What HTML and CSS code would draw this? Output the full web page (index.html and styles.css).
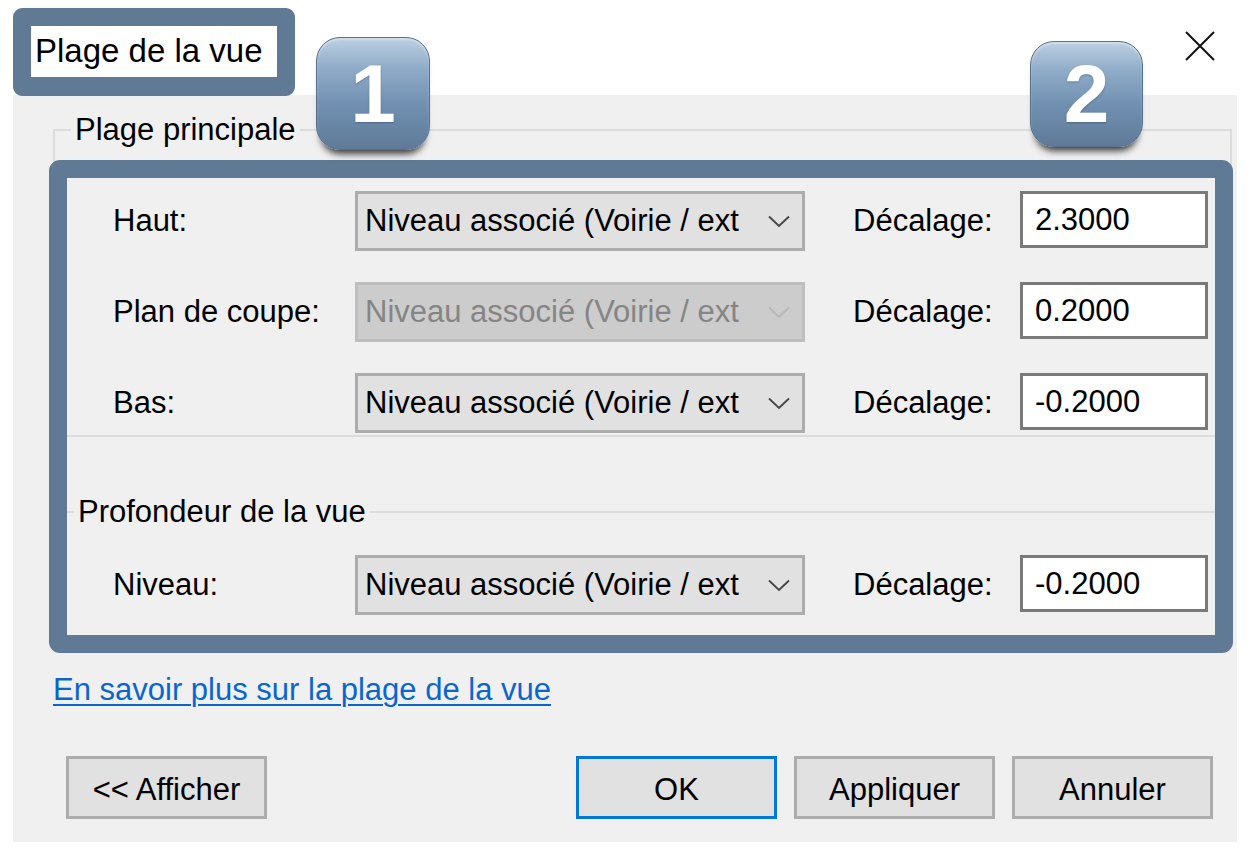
FILE: index.html
```html
<!DOCTYPE html>
<html lang="fr">
<head>
<meta charset="utf-8">
<title>Plage de la vue</title>
<link rel="stylesheet" href="styles.css">
</head>
<body>
<div class="window">
  <header class="titlebar">
    <span class="title">Plage de la vue</span>
    <span class="close" aria-label="Fermer">
      <svg width="32" height="32" viewBox="0 0 32 32"><path d="M2 2 L30 30 M30 2 L2 30" stroke="#111" stroke-width="2" fill="none"/></svg>
    </span>
  </header>
  <main class="dialog">
    <fieldset class="group group-main">
      <legend class="legend">Plage principale</legend>
      <div class="row">
        <span class="label">Haut:</span>
        <div class="select"><span class="select-text">Niveau associé (Voirie / ext</span><svg class="chev" width="22" height="13" viewBox="0 0 22 13"><path d="M1 1.5 L11 11 L21 1.5" stroke="#444" stroke-width="1.8" fill="none"/></svg></div>
        <span class="offset-label">Décalage:</span>
        <div class="input">2.3000</div>
      </div>
      <div class="row">
        <span class="label">Plan de coupe:</span>
        <div class="select disabled"><span class="select-text">Niveau associé (Voirie / ext</span><svg class="chev" width="22" height="13" viewBox="0 0 22 13"><path d="M1 1.5 L11 11 L21 1.5" stroke="#b8b8b8" stroke-width="1.8" fill="none"/></svg></div>
        <span class="offset-label">Décalage:</span>
        <div class="input">0.2000</div>
      </div>
      <div class="row">
        <span class="label">Bas:</span>
        <div class="select"><span class="select-text">Niveau associé (Voirie / ext</span><svg class="chev" width="22" height="13" viewBox="0 0 22 13"><path d="M1 1.5 L11 11 L21 1.5" stroke="#444" stroke-width="1.8" fill="none"/></svg></div>
        <span class="offset-label">Décalage:</span>
        <div class="input">-0.2000</div>
      </div>
    </fieldset>
    <fieldset class="group group-depth">
      <legend class="legend">Profondeur de la vue</legend>
      <div class="row">
        <span class="label">Niveau:</span>
        <div class="select"><span class="select-text">Niveau associé (Voirie / ext</span><svg class="chev" width="22" height="13" viewBox="0 0 22 13"><path d="M1 1.5 L11 11 L21 1.5" stroke="#444" stroke-width="1.8" fill="none"/></svg></div>
        <span class="offset-label">Décalage:</span>
        <div class="input">-0.2000</div>
      </div>
    </fieldset>
    <a class="link" href="#">En savoir plus sur la plage de la vue</a>
    <footer class="buttons">
      <span class="btn">&lt;&lt; Afficher</span>
      <span class="btn btn-default">OK</span>
      <span class="btn">Appliquer</span>
      <span class="btn">Annuler</span>
    </footer>
  </main>
  <div class="mark mark-title"></div>
  <div class="mark mark-panel"></div>
  <div class="badge badge-1">1</div>
  <div class="badge badge-2">2</div>
</div>
</body>
</html>
```
FILE: styles.css
```css
* { box-sizing: border-box; }
html, body { margin: 0; padding: 0; background: #ffffff; }
body {
  font-family: "Liberation Sans", Arial, sans-serif;
  font-size: 31px;
  color: #000;
}
.window {
  position: relative;
  width: 1258px;
  height: 852px;
  overflow: hidden;
}
.titlebar {
  height: 95px;
  display: flex;
  align-items: center;
  justify-content: space-between;
  padding: 6px 42px 0 35px;
}
.title { font-size: 33px; line-height: 36px; }
.close { display: flex; width: 32px; height: 32px; margin-top: -10px; }

.dialog {
  margin-left: 13px;
  width: 1224px;
  height: 747px;
  background: #f0f0f0;
  padding: 17px 5px 21px 40px;
  display: flex;
  flex-direction: column;
}
.group {
  margin: 0;
  border: 2px solid #dcdcdc;
  padding: 43px 0 2px 0;
  min-width: 0;
}
.legend {
  line-height: 36px;
  padding: 0 4px;
  margin-left: 16px;
}
.group-depth {
  margin-top: 57px;
  padding-top: 25px;
  padding-bottom: 23px;
}
.group-depth .legend { margin-left: 19px; }
.row {
  display: grid;
  grid-template-columns: 242px 450px 215px 188px;
  align-items: center;
  height: 60px;
  padding-left: 58px;
  box-sizing: content-box;
}
.row + .row { margin-top: 31px; }
.label { line-height: 36px; }
.select {
  height: 60px;
  border: 3px solid #adadad;
  background: #e1e1e1;
  display: flex;
  align-items: center;
  padding: 0 12px 0 7px;
  gap: 10px;
}
.select-text {
  flex: 1;
  white-space: nowrap;
  line-height: 36px;
}
.select.disabled {
  background: #cccccc;
  border-color: #bfbfbf;
  color: #858585;
}
.chev { flex: none; }
.offset-label { padding-left: 48px; line-height: 36px; }
.input {
  height: 57px;
  align-self: start;
  border: 3px solid #7a7a7a;
  background: #fff;
  padding-left: 12px;
  display: flex;
  align-items: center;
}
.link {
  margin-top: 30px;
  line-height: 36px;
  color: #0a66cc;
  text-decoration: underline;
  text-decoration-thickness: 2px;
  text-underline-offset: 4px;
  align-self: flex-start;
  padding-top: 2px;
}
.buttons {
  margin-top: 48px;
  display: flex;
  gap: 17px;
  padding: 0 19px 0 13px;
}
.btn {
  width: 201px;
  height: 63px;
  border: 3px solid #adadad;
  background: #e1e1e1;
  display: flex;
  align-items: center;
  justify-content: center;
  padding-top: 4px;
}
.btn-default {
  margin-left: auto;
  border-color: #0078d7;
}

.mark {
  position: absolute;
  border: 18px solid #607a96;
  pointer-events: none;
}
.mark-title {
  left: 13px; top: 8px; width: 282px; height: 88px;
  border-radius: 9px;
  border-bottom-width: 19px;
}
.mark-panel {
  left: 49px; top: 160px; width: 1184px; height: 493px;
  border-radius: 11px;
}
.badge {
  position: absolute;
  border-radius: 24px;
  background: linear-gradient(180deg, #bcd0e3 0%, #8fabc8 28%, #7190b1 60%, #5f7a98 100%);
  border: 1px solid #56708d;
  color: #fff;
  font-family: "Liberation Sans", Arial, sans-serif;
  font-weight: bold;
  font-size: 82px;
  display: flex;
  align-items: center;
  justify-content: center;
  box-shadow: 0 9px 7px -5px rgba(0,0,0,0.75), inset 0 2px 2px rgba(255,255,255,0.35);
  text-shadow: 0 1px 2px rgba(40,60,90,0.4);
}
.badge-1 { left: 316px; top: 37px; width: 114px; height: 113px; }
.badge-2 { left: 1030px; top: 41px; width: 113px; height: 106px; }
```
